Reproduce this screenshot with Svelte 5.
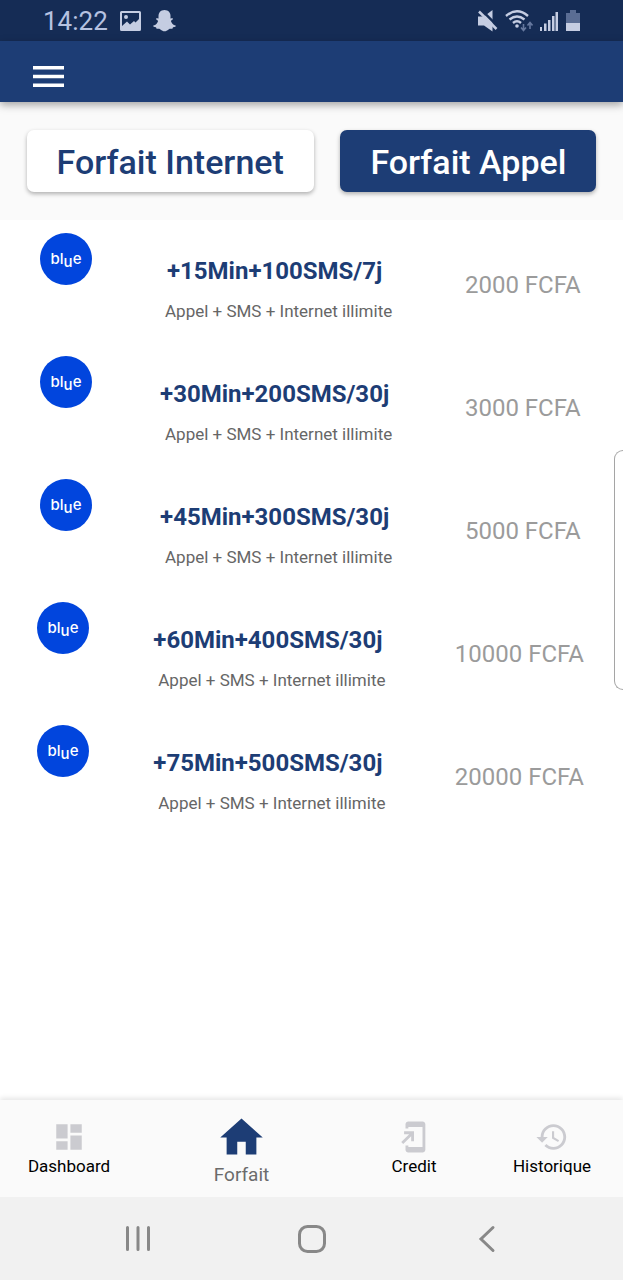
<script>
  const plans = [
    { title: '+15Min+100SMS/7j', price: '2000 FCFA' },
    { title: '+30Min+200SMS/30j', price: '3000 FCFA' },
    { title: '+45Min+300SMS/30j', price: '5000 FCFA' },
    { title: '+60Min+400SMS/30j', price: '10000 FCFA' },
    { title: '+75Min+500SMS/30j', price: '20000 FCFA' }
  ];
  const tabs = [
    { label: 'Dashboard', icon: 'dashboard' },
    { label: 'Forfait', icon: 'home' },
    { label: 'Credit', icon: 'credit' },
    { label: 'Historique', icon: 'history' }
  ];
  let category = $state('appel');
  let current = $state('Forfait');
</script>

<div class="screen">
  <div class="status">
    <div class="status-group">
      <span class="clock">14:22</span>
      <svg width="21" height="20" viewBox="0 0 21 20" aria-hidden="true">
        <path fill-rule="evenodd" fill="currentColor" d="M1.500 0h18q1.500 0 1.500 1.500v17q0 1.500-1.500 1.500h-18Q0 20 0 18.500v-17Q0 0 1.500 0zM2 2v13l5-4.500 3 3 4-3.500 1.500 1.500L19 8V2zM6 4a2 2 0 1 1 0 4a2 2 0 0 1 0-4z" />
      </svg>
      <svg width="23" height="22" viewBox="0 0 23 22" aria-hidden="true">
        <path fill="currentColor" d="M11.500 0c4 0 6 2.800 6 6v2.500c.8.200 2-.6 2.400.2.400 1-1.800 1.600-2 2.300.6 2.200 2.400 4 4.600 4.600.8.300.4 1.200-2.500 1.700-.4.600-.2 1.500-.8 1.500-1 .1-2.200-.4-3.600.6-1.500 1-2.600 1.900-4.100 1.900s-2.600-.9-4.100-1.900c-1.400-1-2.600-.5-3.600-.6-.6 0-.4-.9-.8-1.500C.1 16.800-.3 15.900.5 15.600c2.200-.6 4-2.400 4.600-4.600-.2-.7-2.400-1.300-2-2.300.4-.8 1.600 0 2.400-.2V6c0-3.200 2-6 6-6z" />
      </svg>
    </div>
    <div class="status-group signals">
      <svg width="20" height="22" viewBox="0 0 20 22" aria-hidden="true">
        <path fill="currentColor" d="M0 6.500h6L14.500 0v21.500L6 15.500H0z" />
        <path d="M3.500 0L21 17.500" stroke="#152c55" stroke-width="2.500" />
        <path d="M1 1.500L18.500 19" stroke="currentColor" stroke-width="2.500" />
      </svg>
      <svg width="28" height="22" viewBox="0 0 28 22" aria-hidden="true">
        <g fill="none" stroke="currentColor" stroke-width="2.400">
          <path d="M1 6Q12 -3.500 23 6" />
          <path d="M4.500 9.500Q12 3.500 19.500 9.500" />
          <path d="M8 13Q12 9.500 16 13" />
        </g>
        <circle cx="12" cy="16" r="1.800" fill="currentColor" />
        <path d="M18.500 14v6M16 17.500l2.500 3 2.500-3M25 19v-6M22.500 15.500l2.500-3 2.500 3" fill="none" stroke="#66799f" stroke-width="1.600" />
      </svg>
      <svg width="19" height="20" viewBox="0 0 19 20" aria-hidden="true">
        <path fill="currentColor" d="M0 16h2v4H0zM4 12.500h2.500V20H4zM8 9h2.500v11H8zM12 5h2.500v15H12zM15.500 1H18v19h-2.500z" />
      </svg>
      <svg width="14" height="21" viewBox="0 0 14 21" aria-hidden="true">
        <path fill="#5a6d94" d="M4 0h6v3h4v10H0V3h4z" />
        <path fill="currentColor" d="M0 13h14v8H0z" />
      </svg>
    </div>
  </div>

  <header>
    <button class="menu" aria-label="Menu">
      <svg width="31" height="21" viewBox="0 0 31 21" aria-hidden="true">
        <path fill="#fff" d="M0 0h31v3.500H0zM0 8.750h31v3.500H0zM0 17.500h31V21H0z" />
      </svg>
    </button>
  </header>

  <div class="switch">
    <button class:active={category === 'internet'} onclick={() => (category = 'internet')}>Forfait Internet</button>
    <button class:active={category === 'appel'} onclick={() => (category = 'appel')}>Forfait Appel</button>
  </div>

  <main>
    <ul>
      {#each plans as plan}
        <li>
          <svg class="logo" viewBox="0 0 52 52" role="img" aria-label="blue">
            <circle cx="26" cy="26" r="26" fill="#0145dd" />
            <text x="26" y="31" text-anchor="middle">bl<tspan dy="3">u</tspan><tspan dy="-3">e</tspan></text>
          </svg>
          <div class="info">
            <h2>{plan.title}</h2>
            <p>Appel + SMS + Internet illimite</p>
          </div>
          <span class="price">{plan.price}</span>
        </li>
      {/each}
    </ul>
  </main>

  <nav class="tabs">
    {#each tabs as tab}
      <button class:current={current === tab.label} onclick={() => (current = tab.label)}>
        {#if tab.icon === 'dashboard'}
          <svg class="icon" viewBox="0 0 24 24" aria-hidden="true">
            <path d="M3 13h8V3H3v10zm0 8h8v-6H3v6zm10 0h8V11h-8v10zm0-18v6h8V3h-8z" />
          </svg>
        {:else if tab.icon === 'home'}
          <svg class="icon" viewBox="0 0 24 24" aria-hidden="true">
            <path d="M10 20v-6h4v6h5v-8h3L12 3 2 12h3v8z" />
          </svg>
        {:else if tab.icon === 'credit'}
          <svg class="icon" viewBox="0 0 24 24" aria-hidden="true">
            <path d="M18 1.010L8 1c-1.100 0-2 .9-2 2v3h2V5h10v14H8v-1H6v3c0 1.100.9 2 2 2h10c1.100 0 2-.9 2-2V3c0-1.100-.9-1.990-2-1.990zM10 15h2V8H5v2h3.590L3 15.590 4.410 17 10 11.410V15z" />
          </svg>
        {:else}
          <svg class="icon" viewBox="0 0 24 24" aria-hidden="true">
            <path d="M13 3c-4.970 0-9 4.030-9 9H1l3.890 3.890.07.14L9 12H6c0-3.870 3.130-7 7-7s7 3.130 7 7-3.130 7-7 7c-1.930 0-3.680-.79-4.940-2.060l-1.420 1.420C8.270 19.990 10.510 21 13 21c4.970 0 9-4.030 9-9s-4.030-9-9-9zm-1 5v5l4.280 2.540.72-1.210-3.500-2.080V8H12z" />
          </svg>
        {/if}
        <span>{tab.label}</span>
      </button>
    {/each}
  </nav>

  <div class="system">
    <button aria-label="Recents">
      <svg width="28" height="28" viewBox="0 0 28 28" aria-hidden="true"><path d="M3.500 2.500v22M14 2.500v22M24.500 2.500v22" /></svg>
    </button>
    <button aria-label="Home">
      <svg width="28" height="28" viewBox="0 0 28 28" aria-hidden="true"><rect x="1.500" y="1.500" width="25" height="25" rx="8" /></svg>
    </button>
    <button aria-label="Back">
      <svg width="28" height="28" viewBox="0 0 28 28" aria-hidden="true"><path d="M21 2.500L9 14 21 25.500" /></svg>
    </button>
  </div>

  <div class="edge-panel"></div>
</div>

<style>
  :global(body) {
    margin: 0;
  }
  .screen {
    position: relative;
    display: flex;
    flex-direction: column;
    min-height: 100vh;
    background: #fff;
    font-family: Roboto, sans-serif;
  }
  button {
    border: 0;
    background: none;
    padding: 0;
    font: inherit;
    cursor: pointer;
  }
  svg {
    display: block;
  }
  .status {
    display: flex;
    justify-content: space-between;
    align-items: center;
    box-sizing: border-box;
    height: 41px;
    padding: 0 43px;
    background: #152c55;
    color: #c5cde2;
  }
  .status-group {
    display: flex;
    align-items: center;
    gap: 12px;
  }
  .signals {
    gap: 7px;
  }
  .clock {
    font-size: 26px;
    line-height: 40px;
    color: #b6c2e0;
  }
  header {
    position: relative;
    display: flex;
    height: 61px;
    padding: 10px 33px 0;
    box-sizing: border-box;
    align-items: center;
    background: #1d3d75;
    box-shadow: 0 3px 8px rgba(0, 0, 0, 0.35);
  }
  .switch {
    display: flex;
    justify-content: space-evenly;
    padding: 28px 0;
    background: #fafafa;
  }
  .switch button {
    padding: 2px 30px 0;
    border-radius: 7px;
    background: #fff;
    color: #1d3d75;
    font-size: 34px;
    font-weight: 500;
    line-height: 60px;
    box-shadow: 0 2px 4px rgba(0, 0, 0, 0.3);
  }
  .switch button.active {
    background: #1d3d75;
    color: #fff;
  }
  main {
    flex: 1;
  }
  ul {
    list-style: none;
    margin: 0;
    padding: 0;
  }
  li {
    display: flex;
    justify-content: space-evenly;
    align-items: flex-start;
    box-sizing: border-box;
    height: 123px;
    padding: 13px 2px 0 0;
  }
  .logo {
    width: 52px;
    height: 52px;
  }
  .logo text {
    font: 500 15px Inter, sans-serif;
    fill: #fff;
  }
  .info {
    width: 292px;
    padding-top: 23px;
    text-align: center;
  }
  h2 {
    margin: 0;
    padding-right: 8px;
    color: #1d3d75;
    font-size: 24px;
    font-weight: 700;
    line-height: 30px;
  }
  p {
    margin: 13px 0 0;
    color: #666;
    font-size: 17px;
    line-height: 24px;
  }
  .price {
    padding-top: 36px;
    color: #9b9b9b;
    font-size: 24px;
    line-height: 32px;
  }
  .tabs {
    display: flex;
    height: 97px;
    padding-right: 2px;
    background: #fafafa;
    box-shadow: 0 -2px 5px rgba(0, 0, 0, 0.1);
  }
  .tabs button {
    flex: 2 1 0;
    display: flex;
    flex-direction: column;
    align-items: center;
    padding-top: 20px;
    color: #000;
    font-size: 17px;
    line-height: 24px;
  }
  .tabs button.current {
    flex-grow: 3;
    padding-top: 12px;
    color: #6b6b6b;
    font-size: 19px;
  }
  .icon {
    width: 34px;
    height: 34px;
    fill: #cbcbd0;
  }
  .current .icon {
    width: 51px;
    height: 51px;
    fill: #1d3d75;
  }
  .system {
    display: flex;
    justify-content: center;
    align-items: center;
    gap: 146px;
    height: 83px;
    background: #f1f1f1;
  }
  .system svg {
    fill: none;
    stroke: #888;
    stroke-width: 3;
    stroke-linecap: round;
  }
  .edge-panel {
    position: absolute;
    right: 0;
    top: 450px;
    box-sizing: border-box;
    width: 9px;
    height: 240px;
    border: 1px solid #a5a5a5;
    border-right: 0;
    border-radius: 10px 0 0 10px;
    background: #fff;
  }
</style>
